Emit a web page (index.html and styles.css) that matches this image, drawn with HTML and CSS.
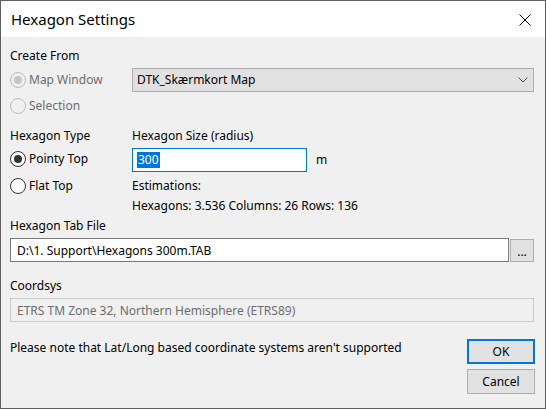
FILE: index.html
```html
<!DOCTYPE html>
<html lang="en">
<head>
<meta charset="utf-8">
<title>Hexagon Settings</title>
<link rel="stylesheet" href="styles.css">
</head>
<body>
<div class="window">
  <div class="titlebar">
    <span class="title">Hexagon Settings</span>
    <svg class="close" width="12" height="12" viewBox="0 0 12 12"><path d="M0.5 0.5 L11.5 11.5 M11.5 0.5 L0.5 11.5" stroke="#000" stroke-width="1" fill="none"/></svg>
  </div>
  <div class="content">
    <div class="label-row r-create">Create From</div>

    <div class="row r-map">
      <div class="left"><span class="radio disabled checked"></span><span class="rtext disabled-text">Map Window</span></div>
      <div class="right">
        <div class="combo">
          <span>DTK_Skærmkort Map</span>
          <svg class="chev" width="10" height="6" viewBox="0 0 10 6"><path d="M0.5 0.5 L5 5 L9.5 0.5" stroke="#555" stroke-width="1" fill="none"/></svg>
        </div>
      </div>
    </div>

    <div class="row r-sel">
      <div class="left"><span class="radio disabled"></span><span class="rtext disabled-text">Selection</span></div>
    </div>

    <div class="label-row r-type">
      <div class="left">Hexagon Type</div>
      <div class="right">Hexagon Size (radius)</div>
    </div>

    <div class="row r-pointy">
      <div class="left up"><span class="radio checked"></span><span class="rtext">Pointy Top</span></div>
      <div class="right">
        <div class="size-input"><span class="sel">300</span></div>
        <span class="unit">m</span>
      </div>
    </div>

    <div class="label-row r-flat">
      <div class="left"><span class="radio"></span><span class="rtext">Flat Top</span></div>
      <div class="right">Estimations:</div>
    </div>

    <div class="label-row r-hex">
      <div class="left"></div>
      <div class="right">Hexagons: 3.536 Columns: 26 Rows: 136</div>
    </div>

    <div class="label-row r-tablabel">Hexagon Tab File</div>

    <div class="row r-tab">
      <div class="tab-input">D:\1. Support\Hexagons 300m.TAB</div>
      <div class="browse">...</div>
    </div>

    <div class="label-row r-coordlabel">Coordsys</div>

    <div class="row r-coord">
      <div class="coord-field">ETRS TM Zone 32, Northern Hemisphere (ETRS89)</div>
    </div>

    <div class="bottom">
      <div class="note">Please note that Lat/Long based coordinate systems aren't supported</div>
      <div class="buttons">
        <div class="btn default">OK</div>
        <div class="btn">Cancel</div>
      </div>
    </div>
  </div>
</div>
</body>
</html>
```

FILE: styles.css
```css
* { box-sizing: border-box; }
html, body { margin: 0; padding: 0; }
body {
  width: 546px;
  height: 409px;
  overflow: hidden;
  background: #6b6b6b;
  font-family: "Noto Sans", "Open Sans", sans-serif;
  font-size: 12px;
  color: #000;
}
.window {
  width: 546px;
  height: 409px;
  border: 1px solid #5f5f5f;
  background: #f0f0f0;
  display: flex;
  flex-direction: column;
}
.titlebar {
  height: 36px;
  flex: none;
  background: #fff;
  display: flex;
  align-items: center;
  justify-content: space-between;
  padding: 0 14px 0 10px;
}
.title {
  font-size: 15px;
  color: #000;
  margin-top: -1px;
}
.close { display: block; margin-top: 1px; }
.content {
  padding: 0 10px 0 9px;
  display: flex;
  flex-direction: column;
}
.label-row {
  height: 16px;
  line-height: 16px;
  display: flex;
  white-space: nowrap;
}
.row {
  display: flex;
  align-items: center;
  white-space: nowrap;
}
.left {
  width: 122px;
  flex: none;
  display: flex;
  align-items: center;
  line-height: 16px;
}
.right {
  flex: 1;
  display: flex;
  align-items: center;
  line-height: 16px;
}
.r-create { margin-top: 11px; }
.r-map { margin-top: 4px; height: 24px; }
.r-sel { margin-top: 2px; height: 24px; }
.r-type { margin-top: 10px; }
.r-pointy { margin-top: 4px; height: 24px; }
.r-pointy .up { margin-top: -3px; }
.r-flat { margin-top: 6px; }
.r-hex { margin-top: 4px; }
.r-tablabel { margin-top: 4px; }
.r-tab { margin-top: 4px; height: 24px; gap: 1px; }
.r-coordlabel { margin-top: 16px; }
.r-coord { margin-top: 4px; height: 24px; }

.radio {
  width: 16px;
  height: 16px;
  border-radius: 50%;
  border: 1px solid #333;
  background: #fff;
  flex: none;
  position: relative;
  margin-right: 3px;
}
.radio.checked::after {
  content: "";
  position: absolute;
  left: 3px;
  top: 3px;
  width: 8px;
  height: 8px;
  border-radius: 50%;
  background: #333;
}
.radio.disabled {
  border-color: #bcbcbc;
  background: #f0f0f0;
}
.radio.disabled.checked::after { background: #c6c6c6; }
.disabled-text { color: #6d6d6d; }

.combo {
  width: 402px;
  height: 24px;
  border: 1px solid #adadad;
  background: #e1e1e1;
  display: flex;
  align-items: center;
  justify-content: space-between;
  padding: 0 5px 0 4px;
}
.chev { display: block; margin-right: 0; }

.size-input {
  width: 175px;
  height: 24px;
  border: 1px solid #0078d7;
  background: #fff;
  display: flex;
  align-items: center;
  padding-left: 4px;
}
.sel {
  background: #0078d7;
  color: #fff;
  line-height: 16px;
  padding: 0 1px;
}
.unit { margin-left: 9px; }

.tab-input {
  width: 499px;
  height: 24px;
  border: 1px solid #7a7a7a;
  background: #fff;
  display: flex;
  align-items: center;
  padding-left: 6px;
}
.browse {
  width: 24px;
  height: 23px;
  border: 1px solid #adadad;
  background: #e1e1e1;
  display: flex;
  align-items: center;
  justify-content: center;
  padding-top: 3px;
  letter-spacing: 0;
}
.coord-field {
  width: 524px;
  height: 24px;
  border: 1px solid #cccccc;
  background: #f0f0f0;
  color: #6d6d6d;
  display: flex;
  align-items: center;
  padding-left: 6px;
}
.bottom {
  display: flex;
  justify-content: space-between;
  align-items: flex-start;
  margin-top: 17px;
}
.note {
  line-height: 16px;
  margin-top: 1px;
  white-space: nowrap;
}
.buttons {
  display: flex;
  flex-direction: column;
  gap: 5px;
}
.btn {
  width: 68px;
  height: 25px;
  border: 1px solid #adadad;
  background: #e1e1e1;
  display: flex;
  align-items: center;
  justify-content: center;
}
.btn.default { border: 2px solid #0078d7; }
```
